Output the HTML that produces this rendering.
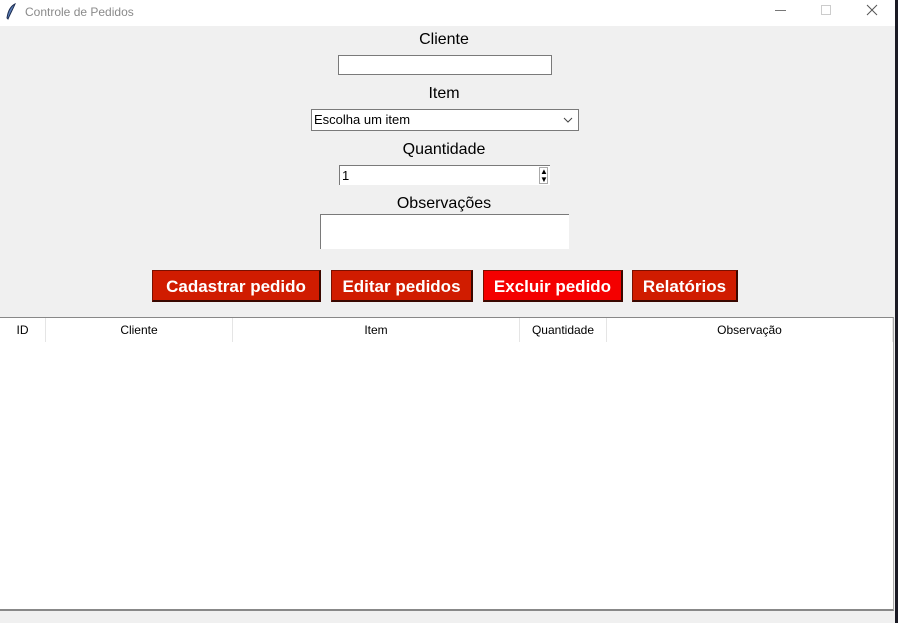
<!DOCTYPE html>
<html><head><meta charset="utf-8"><style>
*{margin:0;padding:0;box-sizing:border-box}
body{width:898px;height:623px;background:#f0f0f0;position:relative;overflow:hidden;font-family:"Liberation Sans",sans-serif}
.a{position:absolute}
.tb{left:0;top:0;width:895px;height:26px;background:#fff}
.lbl{font-size:16px;color:#000;width:898px;text-align:center}
.in{background:#fff;border:1px solid #7a7a7a}
.btn{top:270px;height:32px;color:#fff;font-weight:bold;font-size:17px;text-align:center;line-height:31px;border:1px solid #7a1000;border-right:2px solid #3a0800;border-bottom:2px solid #3a0800;background:#d01c00}
.th{top:318px;height:24px;font-size:12px;line-height:24px;text-align:center;border-right:1px solid #e5e5e5;background:#fff}
</style></head><body>
<div class="a tb"></div>
<svg class="a" style="left:5px;top:3px" width="12" height="18" viewBox="0 0 12 18"><path d="M10 1 C6 3 3 8 2 15 L3 16 C5 11 8 6 10 1Z" fill="#5b7fb8" stroke="#1c2c50" stroke-width="1"/></svg>
<div class="a" style="left:25px;top:5px;font-size:12px;color:#8a8a8a">Controle de Pedidos</div>
<div class="a" style="left:775px;top:10px;width:11px;height:1px;background:#777"></div>
<div class="a" style="left:821px;top:5px;width:10px;height:10px;border:1px solid #ccc"></div>
<svg class="a" style="left:866px;top:4px" width="12" height="12"><path d="M1 1L11 11M11 1L1 11" stroke="#555" stroke-width="1"/></svg>
<div class="a" style="left:895px;top:0;width:3px;height:623px;background:#1a1a24"></div>

<div class="a lbl" style="left:-5px;top:31px">Cliente</div>
<div class="a in" style="left:338px;top:55px;width:214px;height:20px"></div>
<div class="a lbl" style="left:-5px;top:85px">Item</div>
<div class="a in" style="left:311px;top:109px;width:268px;height:22px;font-size:13px;line-height:20px;padding-left:2px">Escolha um item
<svg class="a" style="right:5px;top:7px" width="10" height="6"><path d="M1 1L5 5L9 1" stroke="#444" fill="none"/></svg></div>
<div class="a lbl" style="left:-5px;top:141px">Quantidade</div>
<div class="a" style="left:339px;top:165px;width:211px;height:20px;background:#fff;border-top:1px solid #7a7a7a;border-left:1px solid #7a7a7a;font-size:13px;line-height:19px;padding-left:2px">1
<div class="a" style="right:2px;top:1px;width:9px;height:17px;font-size:8px;line-height:8px;text-align:center;border:1px solid #aaa">▲<br>▼</div></div>
<div class="a lbl" style="left:-5px;top:195px">Observações</div>
<div class="a" style="left:320px;top:214px;width:249px;height:35px;background:#fff;border-top:1px solid #7a7a7a;border-left:1px solid #7a7a7a"></div>

<div class="a btn" style="left:152px;width:169px">Cadastrar pedido</div>
<div class="a btn" style="left:331px;width:142px">Editar pedidos</div>
<div class="a btn" style="left:483px;width:140px;background:#f40000">Excluir pedido</div>
<div class="a btn" style="left:632px;width:106px">Relatórios</div>

<div class="a" style="left:0;top:317px;width:894px;height:294px;background:#fff;border-top:1px solid #888;border-bottom:2px solid #888;border-right:1px solid #aaa"></div>
<div class="a th" style="left:0;width:46px">ID</div>
<div class="a th" style="left:46px;width:187px">Cliente</div>
<div class="a th" style="left:233px;width:287px">Item</div>
<div class="a th" style="left:520px;width:87px">Quantidade</div>
<div class="a th" style="left:607px;width:286px">Observação</div>
</body></html>
